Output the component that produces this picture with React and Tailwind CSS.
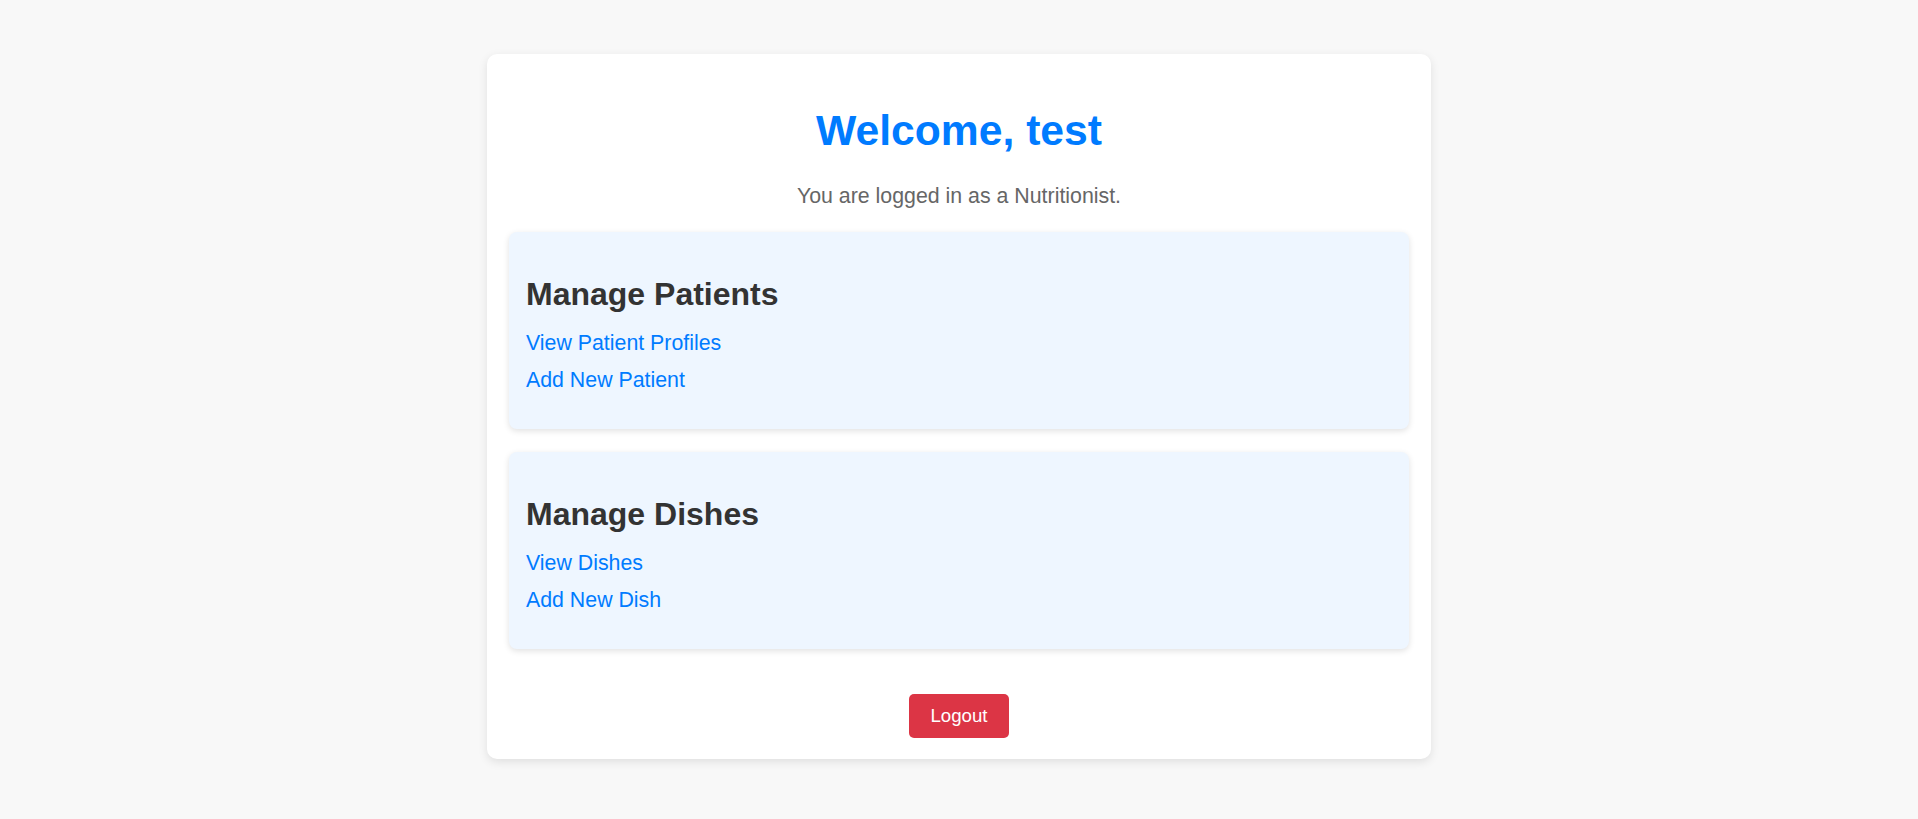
import React from "react";

const sections = [
  { title: "Manage Patients", links: ["View Patient Profiles", "Add New Patient"] },
  { title: "Manage Dishes", links: ["View Dishes", "Add New Dish"] },
];

const App = () => {
  return (
    <div className="min-h-screen w-full bg-[#f8f8f8] pt-[54px] pb-[61px] font-['Liberation_Sans',Arial,sans-serif]">
      <div className="mx-auto w-[944px] rounded-[10px] bg-white px-[22px] pt-[52px] pb-[21px] shadow-[0_3px_10px_rgba(0,0,0,0.1)]">
        {/* Header */}
        <h1 className="text-center text-[42.67px] leading-[49px] font-bold text-[#007bff]">Welcome, test</h1>
        <p className="mt-[29px] text-center text-[21.33px] leading-[24px] text-[#666]">
          You are logged in as a Nutritionist.
        </p>

        {/* Sections */}
        <div className="mt-[24px] flex flex-col gap-[23px]">
          {sections.map((s) => (
            <div
              key={s.title}
              className="rounded-[8px] bg-[#eef6ff] px-[17px] pt-[44px] pb-[37px] shadow-[0_2px_6px_rgba(0,0,0,0.12)]"
            >
              <h2 className="text-[32px] leading-[37px] font-bold text-[#333]">{s.title}</h2>
              <ul className="mt-[18px] flex flex-col gap-[13px] text-[21.33px] leading-[24px]">
                {s.links.map((l) => (
                  <li key={l}>
                    <a href="#" className="text-[#007bff]">
                      {l}
                    </a>
                  </li>
                ))}
              </ul>
            </div>
          ))}
        </div>

        {/* Logout */}
        <div className="mt-[45px] flex justify-center">
          <button className="h-[44px] w-[100px] rounded-[5px] bg-[#dc3545] text-[18.67px] leading-[22px] text-white">
            Logout
          </button>
        </div>
      </div>
    </div>
  );
};

export default App;
